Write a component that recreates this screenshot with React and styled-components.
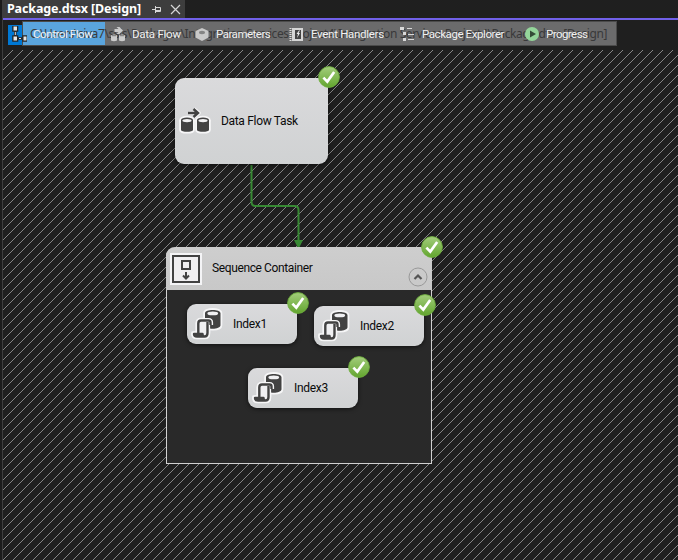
import React from 'react';
import styled, { createGlobalStyle } from 'styled-components';

const Global = createGlobalStyle`
  * { box-sizing: border-box; }
  body { margin: 0; background: #1f1f1f; overflow: hidden; }
`;

const Window = styled.div`
  width: 678px;
  height: 560px;
  display: flex;
  flex-direction: column;
  background: #1f1f1f;
  border-left: 2px solid #1b1b1b;
  box-shadow: inset 1px 0 #3d3d3d;
  font-family: Roboto, 'Liberation Sans', sans-serif;
`;

const TabStrip = styled.div`
  height: 20px;
  flex: none;
  margin-left: 1px;
  border-bottom: 2px solid #7160e8;
`;

const DocumentTab = styled.div`
  display: flex;
  align-items: center;
  width: 182px;
  height: 18px;
  padding-left: 4px;
  background: #3d3d3d;
  color: #fff;
`;

const TabTitle = styled.span`
  width: 142px;
  font: 700 12.5px/18px 'Noto Sans', sans-serif;
  letter-spacing: -0.14px;
  white-space: nowrap;
`;

const TabGlyph = styled.svg`
  flex: none;
  margin-left: ${(p) => p.$gap || 0}px;
  fill: none;
  stroke: #d6d6d6;
`;

const ToolbarArea = styled.div`
  position: relative;
  height: 30px;
  flex: none;
  padding: 5px 0 0 6px;
`;

const Toolbar = styled.div`
  display: grid;
  grid-template-columns: 99px 84px 95px 111px 124px 100px;
  height: 20px;
`;

const ToolButton = styled.div`
  display: flex;
  align-items: center;
  background: ${(p) => (p.$active ? '#0078d4' : 'transparent')};
`;

const PathTip = styled.div`
  position: absolute;
  left: 20px;
  top: 1px;
  width: 595px;
  height: 25px;
  padding-left: 7px;
  border: 1px solid #4b4b4b;
  background: linear-gradient(90deg, #5aa5de 0 82px, #6b6b6c 82px);
  color: #39393a;
  font: 12px/24px 'Noto Sans', sans-serif;
  letter-spacing: ${(p) => p.$track}px;
  white-space: nowrap;
`;

const ToolOverlay = styled(Toolbar)`
  position: absolute;
  left: 6px;
  top: 4px;
`;

const ToolIcon = styled.svg`
  width: 16px;
  height: 16px;
  flex: none;
  margin-left: 3px;
`;

const ToolLabel = styled.span`
  margin-left: 6px;
  color: #f1f1f1;
  font-size: 11.5px;
  letter-spacing: ${(p) => p.$track || 0}px;
  white-space: nowrap;
`;

const Surface = styled.div`
  position: relative;
  flex: 1;
  margin-left: 1px;
`;

const Hatch = styled.svg`
  display: block;
  width: 675px;
  height: 510px;
`;

const Connector = styled.svg`
  position: absolute;
  left: 242px;
  top: 114px;
`;

const Task = styled.div`
  position: absolute;
  left: ${(p) => p.$x}px;
  top: ${(p) => p.$y}px;
  width: ${(p) => p.$w}px;
  height: ${(p) => p.$h}px;
  display: flex;
  align-items: center;
  padding-left: 4px;
  border-radius: 9px;
  background: linear-gradient(#dadadc, #d0d2d3);
  box-shadow: 0 1px 4px #0009;
`;

const TaskLabel = styled.span`
  margin-left: ${(p) => p.$gap}px;
  color: #0b0b0b;
  font-size: 12px;
  line-height: 16px;
  letter-spacing: ${(p) => p.$track || 0}px;
  white-space: nowrap;
`;

const Container = styled.div`
  position: absolute;
  left: 163px;
  top: 197px;
  width: 266px;
  height: 217px;
  border: 1px solid #d0d0d0;
  border-top: 0;
  border-radius: 9px 9px 0 0;
  background: #292929;
`;

const ContainerHeader = styled.div`
  display: flex;
  align-items: center;
  height: 43px;
  margin: 0 -1px;
  padding-left: 4px;
  border-radius: 9px 9px 0 0;
  background: linear-gradient(#cecece, #c8c8c8);
`;

const HeaderLabel = styled(TaskLabel)`
  padding-bottom: 2px;
`;

const CollapseButton = styled.svg`
  margin: 16px 4px 0 auto;
`;

const Badge = styled.svg`
  position: absolute;
  right: -12px;
  top: ${(p) => p.$top}px;
`;

const Success = ({ top = -12 }) => (
  <Badge $top={top} width="22" height="22" viewBox="0 0 22 22">
    <defs>
      <linearGradient id="ok" x1="0" y1="0" x2="0" y2="1">
        <stop offset="0" stopColor="#a3cd7c" />
        <stop offset="1" stopColor="#62a52e" />
      </linearGradient>
    </defs>
    <circle cx="11" cy="11" r="10.4" fill="url(#ok)" stroke="#6eae3d" strokeWidth=".9" />
    <path d="M5.4 11.6L9.3 15.6L16.2 6" fill="none" stroke="#fff" strokeWidth="2.7" />
  </Badge>
);

const flowShape = (
  <>
    <path d="M2 13.2v9.5c0 2.8 12 2.8 12 0v-9.5M18 13.2v9.5c0 2.8 12 2.8 12 0v-9.5" />
    <ellipse cx="8" cy="13.2" rx="6" ry="2.7" />
    <ellipse cx="24" cy="13.2" rx="6" ry="2.7" />
  </>
);

const DataFlowIcon = () => (
  <svg width="32" height="28" viewBox="0 0 32 28">
    <g fill="#f6f6f7" stroke="#f6f6f7" strokeWidth="3.6" strokeLinejoin="round">
      {flowShape}
      <path d="M9.5 6h11M15 2l5 4-5 4" />
    </g>
    <g fill="#424242">{flowShape}</g>
    <ellipse cx="8" cy="13.6" rx="4.6" ry="1.7" fill="#f0f0f2" />
    <ellipse cx="24" cy="13.6" rx="4.6" ry="1.7" fill="#f0f0f2" />
    <path d="M9 6h10M14.5 2l4.5 4-4.5 4" fill="none" stroke="#424242" strokeWidth="2.4" />
  </svg>
);

const scroll = 'M19.5 17v-2.500q0-2-2-2H10q-2.700 0-2.700 3V25.500M16.500 14v11q0 3.500-3 3.500H6q-3 0-3-2.500h8.500q0 2.500 2 2.500';
const cylinder = 'M14 5.200v12c0 4.600 15.500 4.600 15.500 0v-12c0-4.400-15.500-4.400-15.500 0z';

const ScriptIcon = () => (
  <svg width="32" height="32" viewBox="0 0 32 32">
    <g fill="#f6f6f7" stroke="#f6f6f7" strokeLinejoin="round">
      <path d={cylinder} strokeWidth="3.6" />
      <path d={scroll} strokeWidth="5.600" strokeLinecap="round" />
    </g>
    <path d={cylinder} fill="#424242" />
    <ellipse cx="21.750" cy="5.400" rx="5.400" ry="1.900" fill="#f0f0f2" />
    <path d={scroll} fill="none" stroke="#f6f6f7" strokeWidth="5.200" />
    <path d="M8 13h8.500v14H8z" fill="#f0f0f2" />
    <path d={scroll} fill="none" stroke="#424242" strokeWidth="2.400" strokeLinejoin="round" />
  </svg>
);

const SequenceIcon = () => (
  <svg width="32" height="32" viewBox="0 0 32 32" fill="none" stroke="#424242">
    <path d="M0 0h32v32H0z" fill="#f4f4f6" stroke="none" />
    <path d="M3 3h26v26H3z" fill="#f0eff1" strokeWidth="2" />
    <path d="M12 8h8v8h-8zM16 19v6M13 22.5l3 3 3-3" strokeWidth="2" />
  </svg>
);

const controlShape = 'M2.500 .500h3.500v4h-3.500zM2.500 10.500h3.500v4h-3.500zM12.500 10.500h3v4h-3zM4.300 4.500v6M6 12.500h6';

const icons = {
  control: (
    <g>
      <path d={controlShape} fill="none" stroke="#252525" strokeWidth="2.600" />
      <path d="M2.500 .500h3.500v4h-3.500zM2.500 10.500h3.500v4h-3.500zM12.500 10.500h3v4h-3z" fill="#e4e4e4" />
      <path d="M4.300 6v3M8 12.500h2" stroke="#ddd" />
    </g>
  ),
  data: (
    <g fill="#cbcbcb">
      <path d="M1 9.500q3-2 6 0v5q-3 1.500-6 0zM9 9.500q3-2 6 0v5q-3 1.500-6 0z" />
      <path d="M4.500 3h4L6.500 1h3l3.500 3.500L9.500 8h-3l2-2h-4z" />
      <path d="M2 9.700h4M10 9.700h4" stroke="#777" />
    </g>
  ),
  params: (
    <g>
      <path d="M8 2l6.500 3v6.500L8 15l-6.500-3.500V5z" fill="#c9c9c9" />
      <ellipse cx="8" cy="6.500" rx="3" ry="1.700" fill="#858585" />
    </g>
  ),
  events: (
    <g>
      <path d="M3 2h11v13H3z" fill="#d5d5d5" />
      <path d="M6 4h6v9H6z" fill="#444" />
      <path d="M10 4.500L7.500 8H9l-1 4 3-5H9.500l1.500-2.500z" fill="#eee" />
      <path d="M1.500 2v13" stroke="#ddd" strokeWidth="2" strokeDasharray="1 1" />
    </g>
  ),
  explorer: (
    <g fill="#d8d8d8">
      <path d="M0 1h4v3H0zM3 6h3v3H3zM3 12h3v3H3zM7 2h5v1H7zM8 8h6v1H8zM8 13h6v1H8z" />
    </g>
  ),
  progress: (
    <g>
      <circle cx="8" cy="8" r="7" fill="#94d59a" />
      <path d="M6 4.500v7L12 8z" fill="#344d37" />
    </g>
  ),
};

const tools = [
  ['control', 'Control Flow', -0.42],
  ['data', 'Data Flow', -0.25],
  ['params', 'Parameters', -0.5],
  ['events', 'Event Handlers', -0.3],
  ['explorer', 'Package Explorer', -0.42],
  ['progress', 'Progress', -0.55],
];

const toolItems = tools.map(([id, label, track]) => (
  <ToolButton key={id}>
    <ToolIcon viewBox="0 0 16 16">{icons[id]}</ToolIcon>
    <ToolLabel $track={track}>{label}</ToolLabel>
  </ToolButton>
));

const indexTasks = [
  { label: 'Index1', x: 20, y: 57 },
  { label: 'Index2', x: 147, y: 59 },
  { label: 'Index3', x: 81, y: 121 },
];

export default function App() {
  return (
    <Window>
      <Global />
      <TabStrip>
        <DocumentTab>
          <TabTitle>Package.dtsx [Design]</TabTitle>
          <TabGlyph $gap={3} width="10" height="9" viewBox="0 0 10 9">
            <path d="M0 4.5h3M3.5 1v7M4 2.5h4.5v4H4M4 5.5h4" />
          </TabGlyph>
          <TabGlyph $gap={8} width="11" height="11" viewBox="0 0 11 11" strokeWidth="1.2">
            <path d="M1 1l9 9M10 1l-9 9" />
          </TabGlyph>
        </DocumentTab>
      </TabStrip>
      <ToolbarArea>
        <Toolbar>
          <ToolButton $active />
        </Toolbar>
        <PathTip $track={-0.42}>
          C:\Users\siva7\ssis\Packages\Integration Services Project4\Integration Services Project4\Package.dtsx [Design]
        </PathTip>
        <ToolOverlay>{toolItems}</ToolOverlay>
      </ToolbarArea>
      <Surface>
        <Hatch>
          <defs>
            <pattern id="hatch" x="-1" y="0" width="10" height="10" patternUnits="userSpaceOnUse">
              {Array.from({ length: 10 }, (_, i) => (
                <rect key={i} x={9 - i} y={(i + 1) % 10} width="1" height="1" fill="#858585" />
              ))}
            </pattern>
          </defs>
          <rect width="675" height="510" fill="url(#hatch)" />
        </Hatch>
        <Connector width="64" height="84" viewBox="0 0 64 84">
          <path d="M6 1v37q0 4 4 4h39q4 0 4 4v32" transform="translate(0.500 0)" fill="none" stroke="#388a34" strokeWidth="2" />
          <path d="M49 76h9l-4 8h-1z" fill="#388a34" />
        </Connector>
        <Task $x={172} $y={28} $w={153} $h={86}>
          <DataFlowIcon />
          <TaskLabel $gap={10} $track={-0.32}>Data Flow Task</TaskLabel>
          <Success />
        </Task>
        <Container>
          <ContainerHeader>
            <SequenceIcon />
            <HeaderLabel $gap={10} $track={-0.38}>Sequence Container</HeaderLabel>
            <CollapseButton width="20" height="20" viewBox="0 0 20 20" fill="none">
              <circle cx="10" cy="10" r="9" stroke="#999" />
              <path d="M6.5 12L10 8.5l3.5 3.5" stroke="#555" strokeWidth="2.2" />
            </CollapseButton>
          </ContainerHeader>
          {indexTasks.map((t) => (
            <Task key={t.label} $x={t.x} $y={t.y} $w={110} $h={40}>
              <ScriptIcon />
              <TaskLabel $gap={10} $track={-0.3}>{t.label}</TaskLabel>
              <Success />
            </Task>
          ))}
          <Success top={-11} />
        </Container>
      </Surface>
    </Window>
  );
}
